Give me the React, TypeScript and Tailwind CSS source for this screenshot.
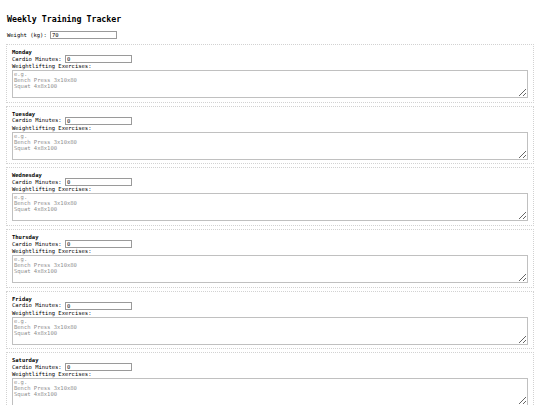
const days = ["Monday", "Tuesday", "Wednesday", "Thursday", "Friday", "Saturday", "Sunday"];

const DayCard = ({ day }: { day: string }) => (
  <div className="border border-dotted border-[#d2d2d2] px-[5px] pt-[4px] pb-[3.5px] mb-[3.2px]">
    <div className="font-bold leading-[6px]">{day}</div>
    <div className="flex items-center">
      <span>Cardio Minutes:&nbsp;</span>
      <input
        type="number"
        defaultValue={0}
        className="w-[67px] h-[8px] border border-[#9a9a9a] px-[1px] text-[5.5px] leading-none"
      />
    </div>
    <div className="leading-[7px]">Weightlifting Exercises:</div>
    <textarea
      className="block w-full h-[28px] border border-[#c0c0c0] px-[1px] text-[5.5px] leading-[6px] resize-y placeholder:text-[#8f8f8f]"
      placeholder={"e.g.\nBench Press 3x10x80\nSquat 4x8x100"}
    />
  </div>
);

export default function App() {
  return (
    <div
      className="px-[6px] pt-[14px] text-[5.5px] leading-[7px] text-black bg-white"
      style={{ fontFamily: '"DejaVu Sans Mono", monospace' }}
    >
      <h1 className="pl-[1px] text-[8.25px] font-bold leading-[10px] mb-[7px]">Weekly Training Tracker</h1>
      <div className="flex items-center pl-[1px] mb-[5px]">
        <span>Weight (kg):&nbsp;</span>
        <input
          type="number"
          defaultValue={70}
          className="w-[67px] h-[8px] border border-[#9a9a9a] px-[1px] text-[5.5px] leading-none"
        />
      </div>
      {days.map((d) => (
        <DayCard key={d} day={d} />
      ))}
    </div>
  );
}
